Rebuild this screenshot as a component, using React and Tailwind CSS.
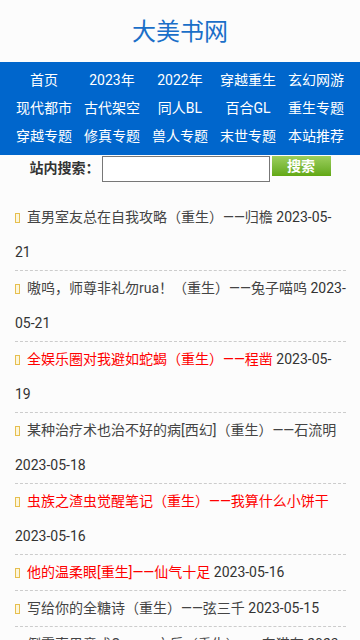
const navItems = [
  '首页', '2023年', '2022年', '穿越重生', '玄幻网游',
  '现代都市', '古代架空', '同人BL', '百合GL', '重生专题',
  '穿越专题', '修真专题', '兽人专题', '末世专题', '本站推荐',
];

const books = [
  { title: '直男室友总在自我攻略（重生）——归檐', date: '2023-05-21' },
  { title: '嗷呜，师尊非礼勿rua！（重生）——兔子喵呜', date: '2023-05-21' },
  { title: '全娱乐圈对我避如蛇蝎（重生）——程凿', date: '2023-05-19', hot: true },
  { title: '某种治疗术也治不好的病[西幻]（重生）——石流明', date: '2023-05-18' },
  { title: '虫族之渣虫觉醒笔记（重生）——我算什么小饼干', date: '2023-05-16', hot: true },
  { title: '他的温柔眼[重生]——仙气十足', date: '2023-05-16', hot: true },
  { title: '写给你的全糖诗（重生）——弦三千', date: '2023-05-15' },
  { title: '倒霉直男竟成Omega之后（重生）——东猫有', date: '2023-05-15' },
];

export default function App() {
  return (
    <div className="min-h-[640px] bg-[#fcfcfc] font-['Roboto','Noto_Sans_CJK_SC',sans-serif]">
      <header className="h-[62px] flex items-center justify-center pt-[2px]">
        <h1 className="text-[24px] leading-none text-[#1a6fc8]">大美书网</h1>
      </header>

      <nav className="bg-[#0066cc] px-[10px] pt-[4px] pb-[5px] grid grid-cols-5">
        {navItems.map((item) => (
          <a key={item} href="#" className="h-[28px] flex items-center justify-center text-[14px] text-white">
            {item}
          </a>
        ))}
      </nav>

      <form className="flex items-start justify-center gap-[2px] pt-[1px]">
        <label className="w-[70px] h-[24px] flex items-center text-[14px] font-bold text-[#333]">站内搜索：</label>
        <input type="text" className="w-[168px] h-[26px] border border-[#777] bg-white" />
        <button type="button" className="w-[59px] h-[20px] bg-gradient-to-b from-[#9ccf5c] to-[#62a811] text-[14px] font-bold text-white leading-none">
          搜索
        </button>
      </form>

      <ul className="mt-[18px] pl-[15px] pr-[14px]">
        {books.map((b) => (
          <li key={b.title} className="border-b border-dashed border-[#ccc] text-[14px] leading-[35px] text-[#444]">
            <span className="inline-block w-[5px] h-[10px] border border-[#e6bf4f] bg-[#fdf6dc] mr-[7px] align-[-1px]" />
            <a href="#" className={b.hot ? 'text-[#ff0000]' : 'text-[#444]'}>{b.title}</a>
            <span className="text-[#333]"> {b.date}</span>
          </li>
        ))}
      </ul>
    </div>
  );
}
